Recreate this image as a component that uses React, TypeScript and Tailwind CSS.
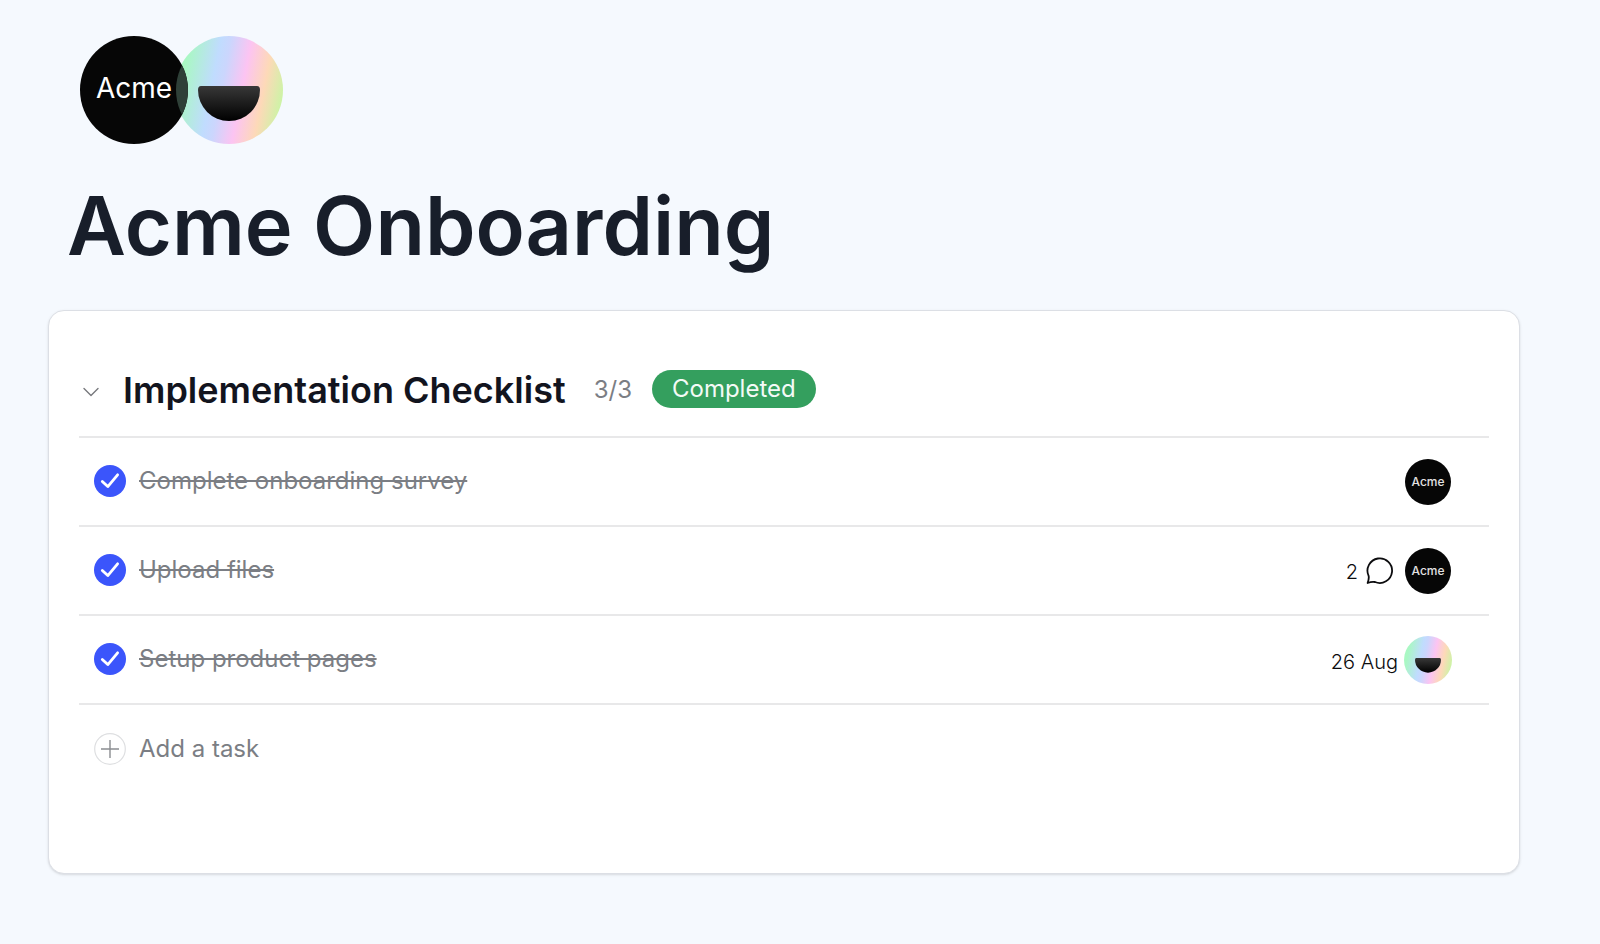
import React, { useState } from "react";

interface Task {
  id: string;
  title: string;
  done: boolean;
  assignee: "acme" | "smile";
  comments?: number;
  due?: string;
}

const INITIAL_TASKS: Task[] = [
  { id: "survey", title: "Complete onboarding survey", done: true, assignee: "acme" },
  { id: "files", title: "Upload files", done: true, assignee: "acme", comments: 2 },
  { id: "pages", title: "Setup product pages", done: true, assignee: "smile", due: "26 Aug" },
];

function Mouth({ className }: { className: string }) {
  return (
    <svg viewBox="0 0 62 35" className={className} aria-hidden="true">
      <defs>
        <linearGradient id="mouth" x1="0" y1="0" x2="0" y2="1">
          <stop offset="0" stopColor="#383838" />
          <stop offset="1" stopColor="#000000" />
        </linearGradient>
      </defs>
      <path d="M3 0H59Q62 0 62 4A31 31 0 0 1 0 4Q0 0 3 0Z" fill="url(#mouth)" />
    </svg>
  );
}

function TaskAvatar({ assignee }: { assignee: Task["assignee"] }) {
  if (assignee === "smile") {
    return (
      <span className="flex size-12 items-center justify-center rounded-full bg-[linear-gradient(101deg,#a9f8c3_12%,#c0dcfe_36%,#cbd6fd_44%,#fcc4f2_60%,#fdd9b8_77%,#c8f6a4_94%)] pt-3">
        <Mouth className="w-[26px]" />
      </span>
    );
  }
  return (
    <span className="mr-px flex size-[46px] items-center justify-center rounded-full bg-[#060606] text-xs font-medium text-[#e2e2e2]">
      Acme
    </span>
  );
}

export default function App() {
  const [tasks, setTasks] = useState<Task[]>(INITIAL_TASKS);
  const [open, setOpen] = useState(true);

  const toggleTask = (id: string) => {
    setTasks(tasks.map((t) => (t.id === id ? { ...t, done: !t.done } : t)));
  };

  const doneCount = tasks.filter((t) => t.done).length;

  return (
    <div className="min-h-screen bg-[#f5f9fe] pt-9 pr-20 pb-[70px] pl-12 font-['Inter',sans-serif]">
      <header>
        <div className="flex pl-8">
          <div className="relative z-10 flex size-[108px] items-center justify-center overflow-hidden rounded-full bg-[#060606] pb-1 text-[28px] text-white">
            {/* tint where the two avatars overlap */}
            <span className="absolute top-0 left-24 size-[108px] rounded-full bg-[#2f4038]" />
            <span className="relative">Acme</span>
          </div>
          <div className="-ml-[13px] flex size-[108px] items-center justify-center rounded-full bg-[linear-gradient(101deg,#a9f8c3_12%,#c0dcfe_36%,#cbd6fd_44%,#fcc4f2_60%,#fdd9b8_77%,#c8f6a4_94%)] pt-[26px]">
            <Mouth className="w-[62px]" />
          </div>
        </div>
        <h1 className="mt-8 pl-[19px] text-[81px] leading-[100px] font-semibold text-[#181e2a]">Acme Onboarding</h1>
      </header>

      <main className="mt-[34px] rounded-2xl border border-[#dcdfe5] bg-white px-[30px] pb-[108px] shadow-sm">
        <div className="flex h-[127px] items-center border-b-2 border-[#e8e8e9] pt-8">
          <button
            type="button"
            aria-label="Toggle checklist"
            aria-expanded={open}
            onClick={() => setOpen(!open)}
            className="flex w-11 pt-1 pl-1"
          >
            <svg viewBox="0 0 16 10" className="w-4" fill="none" stroke="#77787d" strokeWidth="1.4" strokeLinecap="round" strokeLinejoin="round">
              <path d="M1 1.5L8 8.5L15 1.5" />
            </svg>
          </button>
          <h2 className="text-4xl font-semibold text-[#12141e]">Implementation Checklist</h2>
          <span className="ml-7 text-2xl text-[#7b7e84]">
            {doneCount}/{tasks.length}
          </span>
          {doneCount === tasks.length && (
            <span className="mb-0.5 ml-5 flex h-[38px] items-center rounded-full bg-[#349f5e] px-5 text-2xl text-[#f3faf6]">
              Completed
            </span>
          )}
        </div>

        {open && (
          <>
            <ul>
              {tasks.map((task) => (
                <li key={task.id} className="flex h-[89px] items-center justify-between border-b-2 border-[#e8e8e9] pr-[37px] pl-[15px]">
                  <label className="flex items-center gap-[13px] pb-0.5">
                    <span className="grid size-8">
                      <input
                        type="checkbox"
                        checked={task.done}
                        onChange={() => toggleTask(task.id)}
                        className="col-start-1 row-start-1 size-8 appearance-none rounded-full border border-[#d4d5d8] checked:border-0 checked:bg-[#3b55fb]"
                      />
                      <svg
                        viewBox="0 0 32 32"
                        className="pointer-events-none col-start-1 row-start-1 size-8"
                        fill="none"
                        stroke="#ffffff"
                        strokeWidth="2.8"
                        strokeLinecap="round"
                        strokeLinejoin="round"
                      >
                        <path d="M8.3 16.4L13.8 21.6L23.6 9.8" />
                      </svg>
                    </span>
                    <span className={task.done ? "text-2xl text-[#7b7e84] line-through decoration-2" : "text-2xl text-[#12141e]"}>
                      {task.title}
                    </span>
                  </label>
                  <div className="flex items-center text-xl font-light text-[#0c0c0e]">
                    {task.comments && (
                      <button type="button" aria-label={`${task.comments} comments`} className="mr-[11px] flex items-center gap-2">
                        <span className="pt-0.5">{task.comments}</span>
                        <svg viewBox="0 0 28 28" className="size-7" fill="none" stroke="#0c0c0e" strokeWidth="1.8" strokeLinejoin="round">
                          <path d="M1.6 26C2.8 22.8 3.2 21.2 2.6 18.8A12.3 12.3 0 1 1 9 25Q5.6 24.4 1.6 26Z" />
                        </svg>
                      </button>
                    )}
                    {task.due && <time className="mr-1.5 pt-1">{task.due}</time>}
                    <TaskAvatar assignee={task.assignee} />
                  </div>
                </li>
              ))}
            </ul>
            <button type="button" className="mt-7 ml-[15px] flex items-center gap-[13px] text-2xl text-[#7b7e84]">
              <svg viewBox="0 0 32 32" className="size-8" fill="none">
                <circle cx="16" cy="16" r="15.3" stroke="#dedfe1" strokeWidth="1.2" />
                <path d="M7 16H25M16 7V25" stroke="#8b8d91" strokeWidth="1.4" />
              </svg>
              Add a task
            </button>
          </>
        )}
      </main>
    </div>
  );
}
